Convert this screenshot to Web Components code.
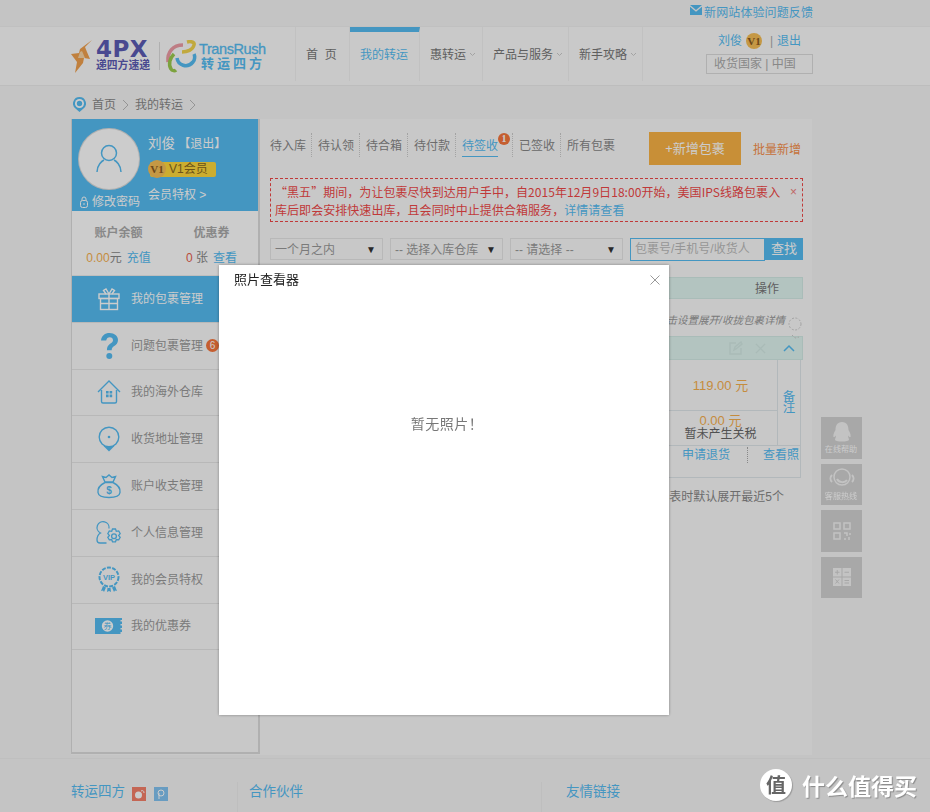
<!DOCTYPE html>
<html lang="zh">
<head>
<meta charset="utf-8">
<title>我的转运</title>
<style>
  html, body { margin: 0; height: 812px; overflow: hidden; background: #f5f5f5; }
  body { font: 12px/1.5 "Liberation Sans", "Noto Sans CJK SC", sans-serif; color: #666; }
  main-area { margin-left: 71px; }
</style>
</head>
<body>
<top-bar></top-bar>
<site-header></site-header>
<bread-crumb></bread-crumb>
<main-area>
  <side-bar>
    <side-item active>
      <svg slot="icon" width="26" height="26" viewBox="0 0 26 26" fill="none" stroke="currentColor" stroke-width="1.4"><rect x="3" y="8" width="20" height="4.5"/><rect x="4.5" y="12.5" width="17" height="11"/><path d="M13 8v15.500M10 8 7.500 4.500 10 3l3 5 3-5 2.500 1.500L16 8M4.500 17.500h17"/></svg>
      我的包裹管理
    </side-item>
    <side-item dot>
      <svg slot="icon" width="26" height="28" viewBox="0 0 26 28" fill="currentColor"><path d="M5 8.500C5.500 3.500 9 1 13.500 1 18.500 1 22 4 22 8c0 3-1.800 4.700-3.700 6-1.700 1.200-2.600 2-2.600 4.300h-4.800c0-3.500 1.200-5 3.200-6.500 1.700-1.200 2.900-2 2.900-3.600 0-1.700-1.300-2.900-3.200-2.900-2 0-3.200 1.200-3.600 3.300z"/><circle cx="13.300" cy="24" r="3"/></svg>
      问题包裹管理
    </side-item>
    <side-item>
      <svg slot="icon" width="24" height="24" viewBox="0 0 24 24" fill="none" stroke="currentColor" stroke-width="1.400"><path d="M1 12 12 1l11 11M4.500 10v11.500a1.500 1.500 0 0 0 1.500 1.500h12a1.500 1.500 0 0 0 1.500-1.500V10"/><path fill="currentColor" stroke="none" d="M9 11h2.600v2.600H9zM12.600 11h2.600v2.600h-2.600zM9 14.600h2.600v2.600H9zM12.600 14.600h2.600v2.600h-2.600z"/></svg>
      我的海外仓库
    </side-item>
    <side-item>
      <svg slot="icon" width="22" height="26" viewBox="0 0 22 26" fill="none" stroke="currentColor" stroke-width="1.400"><circle cx="11" cy="11" r="9.800"/><circle cx="11" cy="11" r="1.300" fill="currentColor" stroke="none"/><path fill="currentColor" stroke="none" d="M5.500 20h11L11 25.500z"/></svg>
      收货地址管理
    </side-item>
    <side-item>
      <svg slot="icon" width="26" height="26" viewBox="0 0 26 26" fill="none" stroke="currentColor" stroke-width="1.400"><path d="M9 9 6.500 3.500 10 4.500 13 2l3 2.500 3.500-1L17 9zM9 9.500C4 12 1.500 16 2 19.500 2.400 23 6 24.500 13 24.500s10.600-1.500 11-5C24.500 16 22 12 17 9.500z"/><text x="13" y="21" font-size="10" font-weight="700" text-anchor="middle" fill="currentColor" stroke="none">$</text></svg>
      账户收支管理
    </side-item>
    <side-item>
      <svg slot="icon" width="28" height="26" viewBox="0 0 28 26" fill="none" stroke="currentColor" stroke-width="1.300"><path d="M14 8.500A6 6 0 1 0 5.500 13C3 14.500 2 17 2 20c0 2 1 3 3 3h6.500"/><path d="m17.500 9 3 0 .8 2.300 2.400-.4 1.500 2.700-1.600 1.800 1.600 1.900-1.500 2.600-2.400-.4-.8 2.300h-3l-.8-2.300-2.400.4-1.500-2.600 1.600-1.900-1.600-1.800 1.500-2.700 2.400.4z"/><circle cx="19" cy="16.300" r="2.400"/></svg>
      个人信息管理
    </side-item>
    <side-item>
      <svg slot="icon" width="24" height="27" viewBox="0 0 24 27" fill="none" stroke="currentColor" stroke-width="1.400"><circle cx="12" cy="11" r="9.500" stroke-dasharray="4 1.300" stroke-width="2"/><text x="12" y="14" font-size="7.500" font-weight="700" text-anchor="middle" fill="currentColor" stroke="none">VIP</text><path fill="currentColor" stroke="none" d="m6 20 3 1.500-2 4.500-1-1.500-2 .5zM18 20l-3 1.500 2 4.500 1-1.500 2 .5zM10.500 22h3l.5 4-2-1-2 1z"/></svg>
      我的会员特权
    </side-item>
    <side-item>
      <svg slot="icon" width="27" height="16" viewBox="0 0 27 16"><path fill="currentColor" d="M0 0h27v2h-1.500v1.500H27v2.500h-1.500v1.500H27V10h-1.500v1.500H27V14h-1.500v2H0z"/><circle cx="12.500" cy="8" r="5.700" fill="#fff"/><text x="12.500" y="11" font-size="8" text-anchor="middle" fill="currentColor">券</text></svg>
      我的优惠券
    </side-item>
  </side-bar>
  <content-panel></content-panel>
</main-area>
<site-footer></site-footer>
<side-widgets></side-widgets>
<photo-modal title="照片查看器">暂无照片！</photo-modal>
<zdm-mark></zdm-mark>

<script>
const BLUE = "#55bcf2";

class TopBar extends HTMLElement {
  constructor() {
    super();
    this.attachShadow({ mode: "open" });
  }

  connectedCallback() {
    this.shadowRoot.innerHTML = `
    <style>
      :host { display: flex; justify-content: flex-end; align-items: center; gap: 2px; height: 26px; padding-right: 117px; color: ${BLUE}; }
      svg { margin-top: -6px; }
      span { margin-top: -1px; letter-spacing: .1px; }
    </style>
    <svg width="12" height="10" viewBox="0 0 12 10"><path fill="${BLUE}" d="M0 0h12L6 5zM0 1.700l6 5 6-5V10H0z"/></svg>
    <span>新网站体验问题反馈</span>
    `;
  }
}

class SiteHeader extends HTMLElement {
  constructor() {
    super();
    this.attachShadow({ mode: "open" });
  }

  static get styles() {
    return `
      :host { display: flex; height: 60px; padding-left: 71px; background: #fcfcfc; border-top: 1px solid #f0f0f0; border-bottom: 1px solid #ededed; box-sizing: border-box; }
      .logo { width: 224px; flex: none; display: flex; align-items: center; }
      .px { width: 55px; margin-left: 4px; color: #5c5cb4; font-weight: 700; }
      .px b { display: block; font: 700 23px/17px "DejaVu Sans", sans-serif; letter-spacing: .5px; height: 17px; }
      .px i { display: block; font-style: normal; font-size: 10.800px; line-height: 12px; margin-top: 1px; white-space: nowrap; }
      .split { width: 1px; height: 28px; background: #ddd; margin: 0 5px 0 8px; }
      .tr { color: ${BLUE}; margin-left: 1px; line-height: 1; }
      .tr b { display: block; font-weight: 400; font-size: 14.500px; letter-spacing: -.4px; -webkit-text-stroke: .3px ${BLUE}; }
      .tr i { display: block; font-style: normal; font-weight: 700; font-size: 13px; letter-spacing: 3px; margin-top: 1px; padding-left: 2px; white-space: nowrap; }
      nav { display: grid; grid-template-columns: 54px 70px 63px 86px 74px; height: 54px; border-left: 1px solid #f2f2f2; box-sizing: border-box; }
      nav a { display: flex; align-items: center; gap: 3px; padding: 2px 0 0 10px; border-right: 1px solid #f2f2f2; color: #777; white-space: nowrap; }
      nav a.on { color: ${BLUE}; border-top: 5px solid ${BLUE}; padding-top: 0; padding-bottom: 3px; box-sizing: border-box; height: 54px; }
      nav svg { margin-top: -1px; }
      .user { margin-left: 63px; width: 107px; display: flex; flex-direction: column; align-items: center; padding-top: 4px; color: ${BLUE}; }
      .user div { display: flex; align-items: center; gap: 4px; height: 20px; }
      .coin { width: 16px; height: 16px; border-radius: 50%; background: #f7bf55; color: #8a5a20; font: 700 11px/16px "Liberation Serif", serif; text-align: center; }
      .sep { color: #aaa; margin-left: 4px; }
      .country { margin-top: 3px; box-sizing: border-box; width: 107px; height: 21px; line-height: 19px; border: 1px solid #ddd; color: #aaa; padding-left: 7px; }
    `;
  }

  connectedCallback() {
    const arrow = `<svg width="7" height="5" viewBox="0 0 7 5" fill="none" stroke="#ccc"><path d="m1 1 2.500 2.500L6 1"/></svg>`;
    this.shadowRoot.innerHTML = `
    <style>${SiteHeader.styles}</style>
    <div class="logo">
      <svg width="21" height="33" viewBox="0 0 21 33"><path fill="#f0a04e" d="M21 0 14 7l2 5 3 7-6-1-1 5-8 10 2-11-6-8 8-1 1-4z"/><path fill="#f8d6a8" d="m9 12 2-1 3 7H7z"/></svg>
      <div class="px"><b>4PX</b><i>递四方速递</i></div>
      <div class="split"></div>
      <svg width="33" height="33" viewBox="0 0 33 33" fill="none" stroke-width="3.500"><path stroke="#ee9da6" d="M3 22C2 12 8 5 18 5"/><path stroke="#f2d44e" d="M17 12c5 0 11-2 12-7 1-3-3-4-7-3"/><path stroke="#9ccb4e" d="M9 14c-4 4-6 10-3 15 1 2 4 2 5 1"/><path stroke="${BLUE}" d="M12 18c1 7 10 11 16 4 2-2 2-6 1-8"/></svg>
      <div class="tr"><b>TransRush</b><i>转运四方</i></div>
    </div>
    <nav>
      <a>首&nbsp;&nbsp;页</a>
      <a class="on">我的转运</a>
      <a>惠转运${arrow}</a>
      <a>产品与服务${arrow}</a>
      <a>新手攻略${arrow}</a>
    </nav>
    <div class="user">
      <div>刘俊 <span class="coin">V1</span><span class="sep">|</span>退出</div>
      <div class="country">收货国家 | 中国</div>
    </div>
    `;
  }
}

class BreadCrumb extends HTMLElement {
  constructor() {
    super();
    this.attachShadow({ mode: "open" });
  }

  connectedCallback() {
    const gt = `<svg width="7" height="12" viewBox="0 0 7 12" fill="none" stroke="#bbb"><path d="m1 1 5 5-5 5"/></svg>`;
    this.shadowRoot.innerHTML = `
    <style>
      :host { display: flex; align-items: center; gap: 6px; height: 33px; box-sizing: border-box; padding: 4px 0 0 73px; color: #888; }
    </style>
    <svg width="13" height="15" viewBox="0 0 13 15"><path fill="${BLUE}" d="M6.500 0a6.500 6.500 0 0 1 4 11.600L6.500 15l-4-3.400A6.500 6.500 0 0 1 6.500 0z"/><circle cx="6.500" cy="6.500" r="4.500" fill="#fff"/><circle cx="6.500" cy="6.500" r="2.700" fill="${BLUE}"/></svg>
    <span>首页</span>${gt}<span>我的转运</span>${gt}
    `;
  }
}

class MainArea extends HTMLElement {
  constructor() {
    super();
    this.attachShadow({ mode: "open" });
  }

  connectedCallback() {
    this.shadowRoot.innerHTML = `
    <style>
      :host { display: flex; width: 741px; height: 636px; background: #fbfbfb; }
    </style>
    <slot></slot>
    `;
  }
}

class SideBar extends HTMLElement {
  constructor() {
    super();
    this.attachShadow({ mode: "open" });
  }

  static get styles() {
    return `
      :host { display: block; flex: none; box-sizing: border-box; width: 189px; height: 635px; border-left: 1px solid #dcdcdc; border-right: 2px solid #dcdcdc; border-bottom: 2px solid #dcdcdc; }
      .head { position: relative; height: 92px; background: ${BLUE}; color: #fff; }
      .avatar { position: absolute; left: 7px; top: 10px; width: 60px; height: 60px; border-radius: 50%; background: #fff; box-shadow: 0 0 0 1px #ddd; display: grid; place-items: center; }
      .info { position: absolute; left: 76px; top: 14px; }
      .name { font-size: 13.500px; line-height: 20px; padding-top: 1px; }
      .name small { font-size: 12px; }
      .level { position: relative; margin-top: 8px; width: 66px; height: 15px; margin-left: 2px; padding-left: 19px; box-sizing: border-box; background: #ffd93c; border-radius: 2px; color: #8a6a20; line-height: 15px; }
      .level i { position: absolute; left: -2px; top: -2px; width: 18px; height: 18px; border-radius: 50%; background: #f7bf55; color: #8a5a20; font: 700 11px/18px "Liberation Serif", serif; text-align: center; }
      .perk { margin-top: 8px; line-height: 20px; }
      .pass { position: absolute; left: 8px; bottom: 0; display: flex; align-items: center; gap: 4px; line-height: 18px; }
      .money { display: grid; grid-template-columns: 1fr 1fr; height: 65px; padding: 12px 0 0; box-sizing: border-box; border-bottom: 1px solid #eee; background: #fff; color: #888; text-align: center; }
      .money b { display: block; font-weight: 700; color: #aaa; line-height: 20px; }
      .money div div { margin-top: 5px; line-height: 20px; }
      .org { color: #f7b04e; }
      .red { color: #e8604c; }
      .lnk { color: ${BLUE}; margin-left: 5px; }
    `;
  }

  connectedCallback() {
    this.shadowRoot.innerHTML = `
    <style>${SideBar.styles}</style>
    <div class="head">
      <div class="avatar">
        <svg width="26" height="30" viewBox="0 0 26 30" fill="none" stroke="${BLUE}" stroke-width="1.500"><circle cx="13" cy="9" r="7.500"/><path d="M1 28c0-7 5-11 7-12M25 28c0-7-5-11-7-12"/></svg>
      </div>
      <div class="info">
        <div class="name">刘俊<small> 【退出】</small></div>
        <div class="level"><i>V1</i>V1会员</div>
        <div class="perk">会员特权 &gt;</div>
      </div>
      <div class="pass">
        <svg width="8" height="12" viewBox="0 0 8 12" fill="none" stroke="#fff"><rect x=".5" y="4.500" width="7" height="7" rx="2"/><path d="M2 4.500V3a2 2 0 0 1 4 0v1.500M4 7v2"/></svg>
        修改密码
      </div>
    </div>
    <div class="money">
      <div><b>账户余额</b><div><span class="org">0.00</span>元<span class="lnk">充值</span></div></div>
      <div><b>优惠券</b><div><span class="red">0</span> 张<span class="lnk">查看</span></div></div>
    </div>
    <slot></slot>
    `;
  }
}

class SideItem extends HTMLElement {
  constructor() {
    super();
    this.attachShadow({ mode: "open" });
  }

  connectedCallback() {
    this.shadowRoot.innerHTML = `
    <style>
      :host { display: flex; align-items: center; height: 46.800px; box-sizing: border-box; border-bottom: 1px solid #e6e6e6; color: #999; background: #fbfbfb; }
      :host([active]) { background: ${BLUE}; color: #fff; }
      .ico { width: 59px; flex: none; display: flex; justify-content: center; padding-left: 14px; box-sizing: border-box; color: ${BLUE}; }
      :host([active]) .ico { color: #fff; }
      .dot { width: 13px; height: 13px; border-radius: 50%; background: #f7763c; margin-left: 3px; color: #fff; font-size: 10px; line-height: 13px; text-align: center; }
    </style>
    <span class="ico"><slot name="icon"></slot></span>
    <slot></slot>
    ${this.hasAttribute("dot") ? `<span class="dot">6</span>` : ""}
    `;
  }
}

class ContentPanel extends HTMLElement {
  constructor() {
    super();
    this.attachShadow({ mode: "open" });
  }

  static get styles() {
    return `
      :host { display: block; box-sizing: border-box; width: 552px; padding: 13px 9px 0 10px; color: #888; }
      .top { display: flex; align-items: flex-start; height: 33px; }
      .tabs { display: flex; width: 379px; padding-top: 1px; }
      .tabs a { position: relative; height: 24px; line-height: 26px; padding: 0 5px 0 0; margin-right: 6px; border-right: 1px dotted #ccc; white-space: nowrap; }
      .tabs a.on { color: ${BLUE}; margin-right: 6px; padding-right: 14px; }
      .tabs a.on::after { content: ""; position: absolute; left: 0; width: 36px; bottom: 0; height: 1px; background: ${BLUE}; }
      .tabs a.end { border: 0; }
      .tabs sup { position: absolute; left: 36px; top: 0; width: 12px; height: 12px; border-radius: 50%; background: #f7763c; color: #fff; font: 700 10px/12px "Liberation Serif", serif; text-align: center; }
      .add { width: 92px; height: 33px; line-height: 33px; background: #fbb345; color: #fff; text-align: center; font-size: 13px; }
      .bulk { margin: 9px 0 0 12px; color: #f7904c; line-height: 18px; }
      .notice { position: relative; margin-top: 13px; box-sizing: border-box; height: 44px; border: 1px dashed #f04848; padding: 4px 4px; color: #f04848; line-height: 18px; font-family: "Noto Sans CJK SC", sans-serif; letter-spacing: .05px; white-space: nowrap; }
      .notice a { color: ${BLUE}; }
      .notice s { position: absolute; right: 5px; top: 4px; text-decoration: none; color: #f08080; font: 12px/18px "Liberation Sans", sans-serif; }
      .filters { display: flex; margin-top: 16px; height: 23px; }
      .sel { width: 113px; height: 22px; box-sizing: border-box; margin-right: 7px; padding: 1px 6px 0 4px; border: 1px solid #e6e6e6; display: flex; justify-content: space-between; align-items: center; color: #999; white-space: nowrap; }
      .sel::after { content: "▼"; font-size: 10px; color: #333; }
      .search { display: flex; }
      .search span { width: 135px; height: 23px; box-sizing: border-box; border: 1px solid ${BLUE}; padding-left: 4px; line-height: 20px; color: #bbb; }
      .search b { width: 38px; height: 22px; font-weight: 400; background: ${BLUE}; color: #fff; line-height: 22px; text-align: center; font-size: 13px; }
      .thead { margin-top: 16px; height: 22px; line-height: 22px; background: #e0f5f0; border: 1px solid #d4ece6; box-sizing: border-box; text-align: right; padding-right: 23px; color: #777; }
      .hint { height: 37px; box-sizing: border-box; padding: 13px 18px 0 0; text-align: right; font-size: 10.500px; line-height: 16px; color: #999; font-style: italic; position: relative; }
      .hint svg { position: absolute; right: 1px; top: 18px; }
      .rowhead { display: flex; justify-content: flex-end; align-items: center; height: 24px; box-sizing: border-box; padding-right: 7px; background: #e0f5f0; border: 1px solid #d4ece6; }
      .rowhead svg:nth-child(2) { margin: 0 17px 0 12px; }
      .tbl { width: 531px; box-sizing: border-box; height: 118px; border: 1px solid #dfe6ea; border-top: 0; display: grid; grid-template-columns: 1fr 115px 22px; grid-template-rows: 51px 34px 1fr; }
      .price { grid-column: 2; text-align: center; line-height: 51px; font-size: 13px; color: #f7b04e; border-left: 1px solid #e6e6e6; border-right: 1px solid #dfe6ea; border-bottom: 1px solid #dfe6ea; }
      .mark { grid-column: 3; grid-row: 1 / 3; width: 13px; margin: auto; text-align: center; color: ${BLUE}; font-size: 12.500px; line-height: 11px; }
      .duty { grid-column: 2; grid-row: 2; text-align: center; line-height: 13px; padding-top: 3px; color: #666; border-left: 1px solid #e6e6e6; border-right: 1px solid #dfe6ea; }
      .duty em { display: block; font-style: normal; color: #f7b04e; font-size: 13px; line-height: 14px; }
      .acts { grid-column: 1 / 4; grid-row: 3; border-top: 1px solid #dfe6ea; display: flex; justify-content: flex-end; color: ${BLUE}; line-height: 18px; }
      .acts a { height: 18px; white-space: nowrap; }
      .acts a:first-child { margin-right: 17px; }
      .acts a:last-child { width: 53px; padding-left: 15px; box-sizing: border-box; border-left: 1px dotted #aaa; height: 16px; margin-top: 1px; line-height: 16px; }
      .tip { margin-top: 10px; line-height: 18px; text-align: right; padding-right: 19px; }
    `;
  }

  connectedCallback() {
    this.shadowRoot.innerHTML = `
    <style>${ContentPanel.styles}</style>
    <div class="top">
      <div class="tabs">
        <a>待入库</a><a>待认领</a><a>待合箱</a><a>待付款</a>
        <a class="on">待签收<sup>1</sup></a><a>已签收</a><a class="end">所有包裹</a>
      </div>
      <div class="add">+新增包裹</div>
      <div class="bulk">批量新增</div>
    </div>
    <div class="notice">
      “黑五”期间，为让包裹尽快到达用户手中，自2015年12月9日18:00开始，美国IPS线路包裹入<br>
      库后即会安排快速出库，且会同时中止提供合箱服务，<a>详情请查看</a>
      <s>×</s>
    </div>
    <div class="filters">
      <div class="sel">一个月之内</div>
      <div class="sel">-- 选择入库仓库</div>
      <div class="sel">-- 请选择 --</div>
      <div class="search"><span>包裹号/手机号/收货人</span><b>查找</b></div>
    </div>
    <div class="thead">操作</div>
    <div class="hint">点击设置展开/收拢包裹详情
      <svg width="14" height="25" viewBox="0 0 14 25" fill="none" stroke="#ccc" stroke-dasharray="2 1.500"><circle cx="7" cy="7" r="6"/><path d="m4 18 3 3 4-1"/></svg>
    </div>
    <div class="rowhead">
      <svg width="14" height="14" viewBox="0 0 14 14" fill="none" stroke="#d4eae5" stroke-width="1.400"><path d="M12 7v6H1V2h6M5 9l1-3 6-5 1 2-6 5z"/></svg>
      <svg width="11" height="11" viewBox="0 0 12 12" fill="none" stroke="#d4eae5" stroke-width="1.400"><path d="m1 1 10 10M11 1 1 11"/></svg>
      <svg width="12" height="8" viewBox="0 0 12 8" fill="none" stroke="${BLUE}" stroke-width="1.500"><path d="m1 7 5-5 5 5"/></svg>
    </div>
    <div class="tbl">
      <div class="price">119.00 元</div>
      <div class="mark">备注</div>
      <div class="duty"><em>0.00 元</em>暂未产生关税</div>
      <div class="acts"><a>申请退货</a><a>查看照</a></div>
    </div>
    <div class="tip">温馨提示：进入包裹列表时默认展开最近5个</div>
    `;
  }
}

class SiteFooter extends HTMLElement {
  constructor() {
    super();
    this.attachShadow({ mode: "open" });
  }

  connectedCallback() {
    this.shadowRoot.innerHTML = `
    <style>
      :host { display: grid; grid-template-columns: 166px 304px 1fr; height: 55px; margin-top: 3px; padding: 23px 0 0 71px; box-sizing: border-box; border-top: 1px solid #efefef; color: ${BLUE}; font-size: 13.500px; line-height: 20px; }
      div { display: flex; align-items: flex-start; }
      div + div { border-left: 1px solid #eee; padding-left: 11px; }
      div + div + div { padding-left: 24px; }
      i { width: 14px; height: 14px; margin: 5px 0 0 7px; }
      i + i { margin-left: 8px; }
      svg { display: block; }
    </style>
    <div>转运四方
      <i style="background:#f5806a"><svg width="14" height="14" viewBox="0 0 14 14"><circle cx="6.500" cy="8" r="3.500" fill="#fff"/><path d="M9 4c2-1 3 0 3 2" stroke="#fff" fill="none"/></svg></i>
      <i style="background:#82c3f2"><svg width="14" height="14" viewBox="0 0 14 14" fill="none" stroke="#fff"><circle cx="7" cy="6" r="3"/><path d="M5 6v6"/></svg></i>
    </div>
    <div>合作伙伴</div>
    <div>友情链接</div>
    `;
  }
}

class SideWidgets extends HTMLElement {
  constructor() {
    super();
    this.attachShadow({ mode: "open" });
  }

  connectedCallback() {
    this.shadowRoot.innerHTML = `
    <style>
      :host { position: fixed; left: 821px; top: 417px; width: 41px; display: flex; flex-direction: column; gap: 5px; }
      div { height: 41.500px; background: #d2d2d2; color: #fff; font-size: 9px; line-height: 12px; text-align: center; display: flex; flex-direction: column; align-items: center; justify-content: center; white-space: nowrap; }
      div span { transform: scale(.9); }
    </style>
    <div>
      <svg width="20" height="22" viewBox="0 0 20 22"><path fill="#f4f4f4" d="M10 1c5 0 6.500 4 6.500 8 2 3 2.500 6 2 7-.8.500-2-1-2.500-1.500 0 2 1 3 1 4 0 1.500-3 2-7 2s-7-.5-7-2c0-1 1-2 1-4-.5.500-1.700 2-2.500 1.500-.5-1 0-4 2-7C3.500 5 5 1 10 1z"/></svg>
      <span>在线帮助</span>
    </div>
    <div>
      <svg width="26" height="24" viewBox="0 0 26 24" fill="none" stroke="#f4f4f4" stroke-width="1.500"><circle cx="13" cy="11" r="8"/><path d="M3 9C1 11 1 14 3 16M23 9c2 2 2 5 0 7M8 13c2 4 8 4 10 1" stroke-width="2"/></svg>
      <span>客服热线</span>
    </div>
    <div>
      <svg width="18" height="18" viewBox="0 0 18 18" fill="none" stroke="#f4f4f4" stroke-width="1.500"><rect x="1" y="1" width="6" height="6"/><rect x="11" y="1" width="6" height="6"/><rect x="1" y="11" width="6" height="6"/><path d="M11 11h3v3M17 11v2M11 17h2M16 15v3" /></svg>
    </div>
    <div>
      <svg width="18" height="18" viewBox="0 0 18 18"><path fill="#f4f4f4" d="M0 0h8.500v8.500H0zM9.500 0H18v8.500H9.500zM0 9.500h8.500V18H0zM9.500 9.500H18V18H9.500z"/><path stroke="#d2d2d2" fill="none" d="M4.250 2v4.500M2 4.250h4.500M11.500 4.250H16M2.500 11.500l3.500 4M6 11.500l-3.500 4M11.500 12.500H16M11.500 15H16"/></svg>
    </div>
    `;
  }
}

class PhotoModal extends HTMLElement {
  constructor() {
    super();
    this.attachShadow({ mode: "open" });
  }

  static get styles() {
    return `
      :host { position: fixed; inset: 0; z-index: 10; background: rgba(0, 0, 0, .2); display: block; }
      .box { position: absolute; left: 219px; top: 265px; width: 450px; height: 450px; background: #fff; box-shadow: 0 0 3px rgba(0, 0, 0, .35); display: flex; flex-direction: column; }
      .bar { display: flex; justify-content: space-between; align-items: center; height: 30px; padding: 0 9px 0 15px; color: #222; font-size: 13px; }
      .body { flex: 1; display: grid; place-items: center; padding: 0 0 164px 6px; color: #777; font-size: 14px; font-family: "Noto Sans CJK SC", sans-serif; letter-spacing: .5px; }
    `;
  }

  connectedCallback() {
    this.shadowRoot.innerHTML = `
    <style>${PhotoModal.styles}</style>
    <div class="box">
      <div class="bar">
        <span>${this.getAttribute("title")}</span>
        <svg width="10" height="10" viewBox="0 0 10 10" fill="none" stroke="#999"><path d="m.5.5 9 9M9.500.5l-9 9"/></svg>
      </div>
      <div class="body"><slot></slot></div>
    </div>
    `;
  }
}

class ZdmMark extends HTMLElement {
  constructor() {
    super();
    this.attachShadow({ mode: "open" });
  }

  connectedCallback() {
    this.shadowRoot.innerHTML = `
    <style>
      :host { position: fixed; left: 760px; top: 769px; z-index: 20; display: flex; align-items: center; gap: 10px; font-family: "Noto Sans CJK SC", sans-serif; }
      i { width: 32px; height: 32px; border-radius: 50%; background: #fff; color: #666; font: 700 20px/31px "Noto Sans CJK SC", sans-serif; text-align: center; box-shadow: 1px 1px 1px #999; }
      span { color: #fff; font-size: 23px; line-height: 32px; font-weight: 700; text-shadow: 1px 1px 1px #888; white-space: nowrap; }
    </style>
    <i>值</i><span>什么值得买</span>
    `;
  }
}

customElements.define("top-bar", TopBar);
customElements.define("site-header", SiteHeader);
customElements.define("bread-crumb", BreadCrumb);
customElements.define("main-area", MainArea);
customElements.define("side-bar", SideBar);
customElements.define("side-item", SideItem);
customElements.define("content-panel", ContentPanel);
customElements.define("site-footer", SiteFooter);
customElements.define("side-widgets", SideWidgets);
customElements.define("photo-modal", PhotoModal);
customElements.define("zdm-mark", ZdmMark);
</script>
</body>
</html>
